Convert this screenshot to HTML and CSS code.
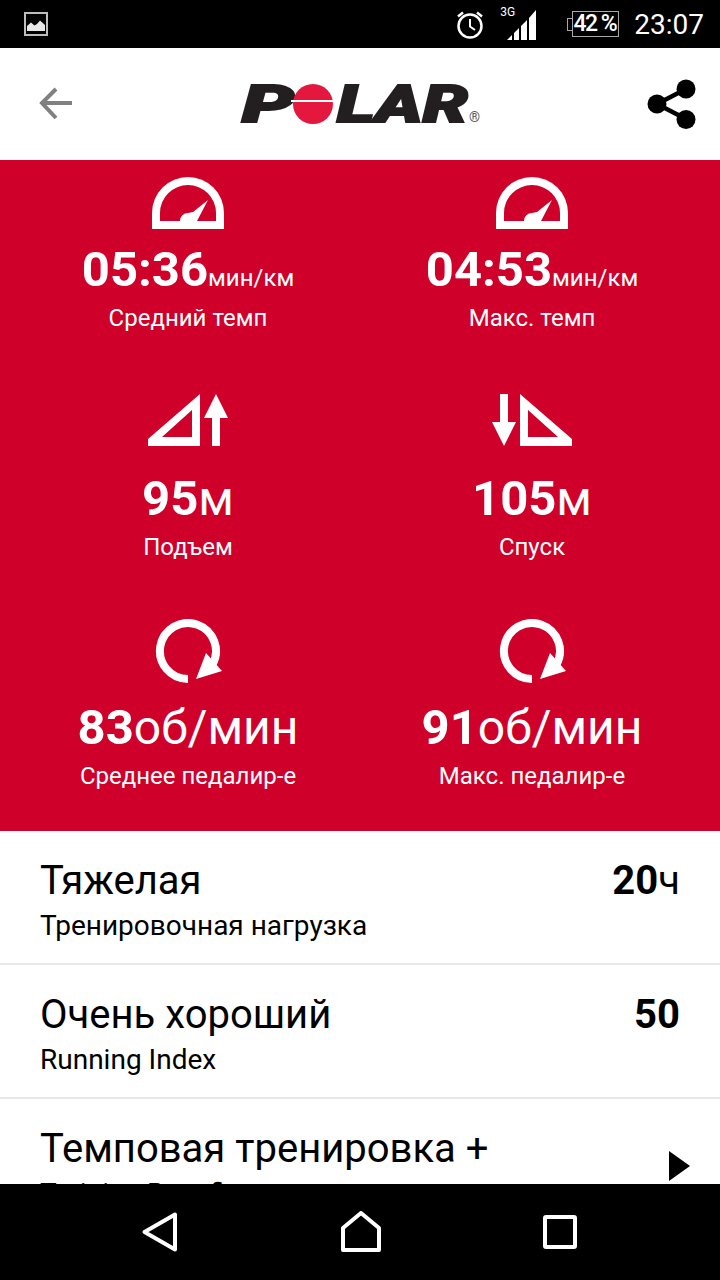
FILE: index.html
```html
<!DOCTYPE html>
<html lang="ru">
<head>
<meta charset="utf-8">
<title>Polar</title>
<link rel="stylesheet" href="styles.css">
</head>
<body>
<div class="screen">
  <div class="statusbar">
    <svg class="st-pic" viewBox="0 0 24 24" width="24" height="24">
      <rect x="1" y="1" width="22" height="22" fill="none" stroke="#bdbdbd" stroke-width="2"/>
      <path d="M3 19V14L7 10.500L10.500 13.500L13 12L16 8.500L21 13V19Z" fill="#e8e8e8"/>
    </svg>
    <div class="st-right">
      <svg class="st-alarm" viewBox="0 0 30 32" width="30" height="32">
        <circle cx="15" cy="18" r="11.500" fill="none" stroke="#fff" stroke-width="2.500"/>
        <path d="M15 11V18.500L20 22" fill="none" stroke="#fff" stroke-width="2"/>
        <path d="M3 8.500L8 4.500M27 8.500L22 4.500" fill="none" stroke="#fff" stroke-width="2.500"/>
      </svg>
      <div class="st-signal">
        <span class="st-3g">3G</span>
        <svg viewBox="0 0 30 30" width="30" height="30">
          <path d="M0 30L5 25V30ZM7 30V23L12 18V30ZM14 30V16L20 10V30ZM22 30V8L29 0V30Z" fill="#fff"/>
        </svg>
      </div>
      <div class="st-battery"><span class="st-batt-text">42 %</span></div>
      <span class="st-time">23:07</span>
    </div>
  </div>

  <header class="topbar">
    <svg class="back" viewBox="0 0 34 34" width="34" height="34">
      <path d="M33 16H6M17 2L3 16L17 31" fill="none" stroke="#808080" stroke-width="4"/>
    </svg>
    <svg class="logo" viewBox="0 0 244 44" width="244" height="44">
      <text class="logo-text" x="1" y="39" textLength="52" lengthAdjust="spacingAndGlyphs">P</text>
      <circle cx="72" cy="21" r="20" fill="#e4173e"/>
      <rect x="50" y="17" width="44" height="2" fill="#fff"/>
      <text class="logo-text" x="96" y="39" textLength="131" lengthAdjust="spacingAndGlyphs">LAR</text>
      <text class="logo-reg" x="228" y="39">®</text>
    </svg>
    <svg class="share" viewBox="0 0 50 50" width="50" height="50">
      <path d="M39 10L10 25L39 40" fill="none" stroke="#000" stroke-width="4.500"/>
      <circle cx="39" cy="10" r="9.500"/>
      <circle cx="10" cy="25" r="9.500"/>
      <circle cx="39" cy="40.500" r="9.500"/>
    </svg>
  </header>

  <main class="content">
    <section class="stats">
      <div class="stat">
        <svg class="stat-icon" viewBox="0 0 90 76">
          <path fill-rule="evenodd" d="M9 68V52A36 36 0 0 1 81 52V68ZM17 60H37A8 8 0 0 1 45 52L50 51L65 39L54 60H73V52A28 28 0 0 0 17 52Z"/>
        </svg>
        <div class="stat-value">05:36<span class="unit-sm">мин/км</span></div>
        <div class="stat-label">Средний темп</div>
      </div>
      <div class="stat">
        <svg class="stat-icon" viewBox="0 0 90 76">
          <path fill-rule="evenodd" d="M9 68V52A36 36 0 0 1 81 52V68ZM17 60H37A8 8 0 0 1 45 52L50 51L65 39L54 60H73V52A28 28 0 0 0 17 52Z"/>
        </svg>
        <div class="stat-value">04:53<span class="unit-sm">мин/км</span></div>
        <div class="stat-label">Макс. темп</div>
      </div>
      <div class="stat">
        <svg class="stat-icon" viewBox="0 0 90 76">
          <path fill-rule="evenodd" d="M5 49L57 4V56H5ZM19 47H49V20Z"/>
          <path d="M73 4L85 28H77V56H69V28H61Z"/>
        </svg>
        <div class="stat-value">95<span class="unit-lg">м</span></div>
        <div class="stat-label">Подъем</div>
      </div>
      <div class="stat">
        <svg class="stat-icon" viewBox="0 0 90 76">
          <path d="M17 56L5 32H13V4H21V32H29Z"/>
          <path fill-rule="evenodd" d="M33 4L85 49V56H33ZM41 20V47H71Z"/>
        </svg>
        <div class="stat-value">105<span class="unit-lg">м</span></div>
        <div class="stat-label">Спуск</div>
      </div>
      <div class="stat">
        <svg class="stat-icon" viewBox="0 0 90 76">
          <path class="ring" d="M45 60A28 28 0 1 1 69.200 46"/>
          <path d="M53 60L79 52L63 34Z"/>
        </svg>
        <div class="stat-value">83<span class="unit-lg">об/мин</span></div>
        <div class="stat-label">Среднее педалир-е</div>
      </div>
      <div class="stat">
        <svg class="stat-icon" viewBox="0 0 90 76">
          <path class="ring" d="M45 60A28 28 0 1 1 69.200 46"/>
          <path d="M53 60L79 52L63 34Z"/>
        </svg>
        <div class="stat-value">91<span class="unit-lg">об/мин</span></div>
        <div class="stat-label">Макс. педалир-е</div>
      </div>
    </section>

    <section class="list">
      <div class="row">
        <div>
          <div class="row-title">Тяжелая</div>
          <div class="row-sub">Тренировочная нагрузка</div>
        </div>
        <div class="row-value">20<span class="row-unit">ч</span></div>
      </div>
      <div class="row">
        <div>
          <div class="row-title">Очень хороший</div>
          <div class="row-sub">Running Index</div>
        </div>
        <div class="row-value">50</div>
      </div>
      <div class="row">
        <div>
          <div class="row-title">Темповая тренировка +</div>
          <div class="row-sub">Training Benefit</div>
        </div>
        <svg class="chevron" viewBox="0 0 21 30" width="21" height="30"><path d="M0 0L21 15L0 30Z"/></svg>
      </div>
    </section>
  </main>

  <nav class="navbar">
    <svg viewBox="0 0 38 42" width="38" height="42">
      <path d="M34 3.500V38.500L3.500 21Z" fill="none" stroke="#fff" stroke-width="4" stroke-linejoin="round"/>
    </svg>
    <svg viewBox="0 0 42 42" width="42" height="42">
      <path d="M21 2L39 17V39H3V17Z" fill="none" stroke="#fff" stroke-width="4" stroke-linejoin="round"/>
    </svg>
    <svg viewBox="0 0 34 34" width="34" height="34">
      <rect x="2" y="2" width="30" height="30" fill="none" stroke="#fff" stroke-width="4" rx="1"/>
    </svg>
  </nav>
</div>
</body>
</html>
```

FILE: styles.css
```css
* {
  box-sizing: border-box;
}

html,
body {
  margin: 0;
  padding: 0;
  background: #fff;
}

.screen {
  width: 720px;
  height: 1280px;
  display: flex;
  flex-direction: column;
  overflow: hidden;
  font-family: Roboto, "Noto Sans", sans-serif;
  color: #000;
}

/* Status bar */
.statusbar {
  flex: none;
  height: 48px;
  background: #000;
  color: #fff;
  display: flex;
  align-items: center;
  justify-content: space-between;
  padding: 0 16px 0 24px;
}

.st-pic {
  display: block;
}

.st-right {
  display: flex;
  align-items: center;
}

.st-alarm {
  display: block;
}

.st-signal {
  width: 30px;
  height: 40px;
  margin: 0 0 8px 22px;
  position: relative;
  display: flex;
  align-items: flex-end;
}

.st-signal svg {
  display: block;
}

.st-3g {
  position: absolute;
  left: -7px;
  top: 5px;
  font-size: 12px;
  line-height: 14px;
}

.st-battery {
  width: 47px;
  height: 26px;
  margin-left: 35px;
  border: 1.500px solid #a8a8a8;
  display: flex;
  align-items: center;
  justify-content: flex-end;
  padding-right: 2px;
  position: relative;
}

.st-battery::before {
  content: "";
  position: absolute;
  left: -6px;
  top: 6px;
  width: 5px;
  height: 11px;
  border: 1.500px solid #a8a8a8;
  border-right: 0;
}

.st-batt-text {
  font-size: 23px;
  font-weight: 500;
  letter-spacing: -1.500px;
  line-height: 24px;
  white-space: nowrap;
}

.st-time {
  margin: 2px 0 0 15px;
  font-size: 28px;
  line-height: 32px;
}

/* Top bar */
.topbar {
  flex: none;
  height: 112px;
  background: #fff;
  display: flex;
  align-items: center;
  justify-content: space-between;
  padding: 0 23px 0 39px;
}

.back,
.logo,
.share {
  display: block;
}

.logo {
  margin-left: 5px;
  margin-top: 1px;
  overflow: visible;
}

.logo-text {
  font-family: Roboto, sans-serif;
  font-weight: 900;
  font-style: italic;
  font-size: 52px;
  fill: #231f20;
  stroke: #231f20;
  stroke-width: 2px;
}

.logo-reg {
  font-family: Roboto, sans-serif;
  font-size: 14px;
  fill: #555;
}

/* Content */
.content {
  flex: 1;
  min-height: 0;
  overflow: hidden;
}

.stats {
  height: 671px;
  background: #cf0029;
  color: #fff;
  padding: 1px 16px 0;
  display: grid;
  grid-template-columns: 1fr 1fr;
  grid-auto-rows: 229px;
  text-align: center;
}

.stat-icon {
  display: block;
  width: 90px;
  height: 76px;
  margin: 0 auto 5px;
  fill: #fff;
}

.stat-icon .ring {
  fill: none;
  stroke: #fff;
  stroke-width: 8;
}

.stat-value {
  font-size: 49px;
  font-weight: 700;
  line-height: 56px;
  white-space: nowrap;
}

.unit-sm {
  font-size: 24px;
  font-weight: 400;
  line-height: 1;
}

.unit-lg {
  font-size: 48px;
  font-weight: 400;
  line-height: 1;
}

.stat-label {
  font-size: 24px;
  line-height: 32px;
  margin-top: 4px;
}

/* List */
.row {
  height: 134px;
  border-bottom: 2px solid #e8e8e8;
  padding: 27px 40px 0;
  display: flex;
  justify-content: space-between;
  align-items: flex-start;
}

.row-title {
  font-size: 40px;
  line-height: 46px;
  white-space: nowrap;
}

.row-sub {
  font-size: 28px;
  line-height: 36px;
  margin-top: 4px;
  white-space: nowrap;
}

.row-value {
  font-size: 40px;
  font-weight: 700;
  line-height: 46px;
  white-space: nowrap;
}

.row-unit {
  font-weight: 400;
}

.chevron {
  display: block;
  margin: 25px -10px 0 0;
}

/* Nav bar */
.navbar {
  flex: none;
  height: 96px;
  background: #000;
  display: flex;
  align-items: center;
  justify-content: space-between;
  padding: 0 143px 0 141px;
}

.navbar svg {
  display: block;
}
```
